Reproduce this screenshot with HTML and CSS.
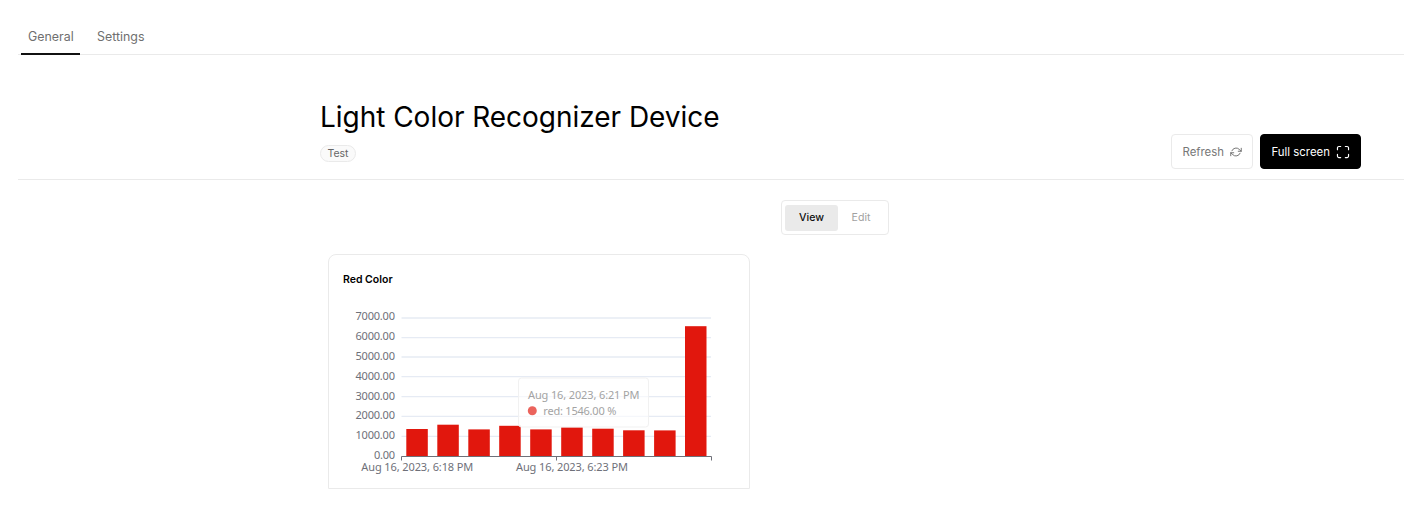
FILE: index.html
```html
<!DOCTYPE html>
<html lang="en">
<head>
<meta charset="utf-8">
<title>Light Color Recognizer Device</title>
<link rel="stylesheet" href="styles.css">
</head>
<body>
<nav class="tabs">
  <a class="tab active">General</a>
  <a class="tab">Settings</a>
</nav>
<header class="head">
  <div class="heading">
    <h1>Light Color Recognizer Device</h1>
    <span class="tag">Test</span>
  </div>
  <div class="actions">
    <button class="btn">Refresh
      <svg class="icon" width="12" height="12" viewBox="0 0 24 24"><path d="M22.500 4.500v6h-6M1.500 19.500v-6h6M3.800 9.500A8.800 8.800 0 0 1 18.300 6.600l4.200 3.900M1.500 13.500l4.200 3.900A8.800 8.800 0 0 0 20.200 14.500"/></svg>
    </button>
    <button class="btn dark">Full screen
      <svg class="icon" width="14" height="14" viewBox="0 0 24 24"><path d="M8 2.500H5A2.500 2.500 0 0 0 2.500 5v3M16 2.500h3A2.500 2.500 0 0 1 21.500 5v3M8 21.500H5A2.500 2.500 0 0 1 2.500 19v-3M16 21.500h3a2.500 2.500 0 0 0 2.500-2.500v-3"/></svg>
    </button>
  </div>
</header>
<main class="content">
  <div class="toggle">
    <span class="option selected">View</span>
    <span class="option">Edit</span>
  </div>
  <section class="card">
    <h2>Red Color</h2>
    <svg class="chart" width="420" height="187" viewBox="329 300 420 187">
      <g class="grid">
        <path d="M401.500 318H711M401.500 337.700H711M401.500 357H711M401.500 376.700H711M401.500 396.700H711M401.500 416.300H711M401.500 436.300H711"/>
      </g>
      <g class="bars">
        <rect x="406.300" y="429" width="21.500" height="27.500"/>
        <rect x="437.300" y="424.700" width="21.500" height="31.800"/>
        <rect x="468.300" y="429.400" width="21.500" height="27.100"/>
        <rect x="499.200" y="425.800" width="21.500" height="30.700"/>
        <rect x="530.200" y="429.400" width="21.500" height="27.100"/>
        <rect x="561.200" y="427.300" width="21.500" height="29.200"/>
        <rect x="592.200" y="428.700" width="21.500" height="27.800"/>
        <rect x="623.100" y="430.300" width="21.500" height="26.200"/>
        <rect x="654.100" y="430.400" width="21.500" height="26.100"/>
        <rect x="685" y="326.200" width="21.500" height="130.300"/>
      </g>
      <path class="axis" d="M401.500 456.500H711.500M401.500 456.500v4M556.500 456.500v4M711.500 456.500v4"/>
      <g class="labels" text-anchor="end">
        <text x="395" y="320.300" textLength="39.500">7000.00</text>
        <text x="395" y="340.300" textLength="39.500">6000.00</text>
        <text x="395" y="360.300" textLength="39.500">5000.00</text>
        <text x="395" y="380.300" textLength="39.500">4000.00</text>
        <text x="395" y="400.200" textLength="39.500">3000.00</text>
        <text x="395" y="419.300" textLength="39.500">2000.00</text>
        <text x="395" y="439.300" textLength="39.500">1000.00</text>
        <text x="395" y="459.300" textLength="21">0.00</text>
      </g>
      <g class="labels">
        <text x="361.300" y="471" textLength="112">Aug 16, 2023, 6:18 PM</text>
        <text x="516" y="471" textLength="112">Aug 16, 2023, 6:23 PM</text>
      </g>
      <g class="tooltip">
        <rect class="box" x="518.500" y="378" width="130" height="49" rx="3"/>
        <circle cx="532.300" cy="410.800" r="4.500"/>
        <text x="528" y="399.300" textLength="111.500">Aug 16, 2023, 6:21 PM</text>
        <text x="543.300" y="415" textLength="73">red: 1546.00 %</text>
      </g>
    </svg>
  </section>
</main>
</body>
</html>
```
FILE: styles.css
```css
* { box-sizing: border-box; }
body {
  margin: 0;
  padding: 19px 2px 0 18px;
  background: #fff;
  font-family: Inter, "Liberation Sans", sans-serif;
  color: #000;
}
.tabs {
  display: flex;
  height: 36px;
  padding-left: 3px;
  border-bottom: 1px solid #eaeaea;
}
.tab {
  height: 36px;
  padding: 0 7px;
  margin-right: 10px;
  font-size: 12.400px;
  line-height: 36px;
  color: #6f6f6f;
}
.tab.active {
  width: 59px;
  border-bottom: 2px solid #111;
}
.head {
  display: flex;
  justify-content: space-between;
  height: 125px;
  padding: 43px 43px 0 302px;
  border-bottom: 1px solid #eaeaea;
}
.heading h1 {
  margin: 0;
  font-size: 28px;
  font-weight: 400;
  line-height: 38px;
  letter-spacing: -0.03px;
  white-space: nowrap;
}
.tag {
  display: block;
  width: 36px;
  height: 17px;
  margin-top: 9px;
  border: 1px solid #eaeaea;
  border-radius: 9px;
  background: #fafafa;
  color: #666;
  font-size: 10.5px;
  line-height: 15px;
  text-align: center;
}
.actions {
  display: flex;
  gap: 7px;
  margin-top: 36px;
}
.btn {
  display: flex;
  align-items: center;
  justify-content: space-between;
  width: 82px;
  height: 35px;
  padding: 0 10px 0 10.500px;
  border: 1px solid #eaeaea;
  border-radius: 4px;
  background: #fff;
  color: #777;
  font: 400 11.400px Inter, sans-serif;
  white-space: nowrap;
}
.btn.dark {
  width: 101px;
  border-color: #000;
  background: #000;
  color: #fff;
}
.icon {
  margin-top: 1px;
  fill: none;
  stroke: currentColor;
  stroke-width: 2;
  stroke-linecap: round;
  stroke-linejoin: round;
}
.content { padding: 20px 0 0 310px; }
.toggle {
  display: flex;
  width: 108px;
  height: 35px;
  margin-left: 453px;
  padding: 4px 4px 4px 3px;
  border: 1px solid #eaeaea;
  border-radius: 4px;
}
.option {
  width: 53px;
  height: 26px;
  border-radius: 3px;
  color: #a1a1a1;
  font-size: 10.600px;
  line-height: 25px;
  text-align: center;
}
.option + .option { width: 46px; }
.option.selected {
  background: #eaeaea;
  color: #111;
  font-weight: 500;
}
.card {
  width: 422px;
  height: 235px;
  margin-top: 19px;
  border: 1px solid #eaeaea;
  border-radius: 8px 8px 0 0;
}
.card h2 {
  height: 45px;
  margin: 0;
  padding: 17px 0 0 14px;
  font-size: 10.500px;
  font-weight: 600;
  line-height: 16px;
}
.chart {
  display: block;
  font-family: "Noto Sans", "Open Sans", sans-serif;
  font-size: 11px;
}
.grid path { stroke: #e6ebf4; stroke-width: 1.300; }
.bars { fill: #e1170d; }
.axis { fill: none; stroke: #6e7079; }
.labels { fill: #6e7079; }
.tooltip text { fill: #a3a3a3; }
.tooltip circle { fill: #eb635c; }
.tooltip .box { fill: #fff; fill-opacity: 0.6; stroke: #f1f1f1; }
```
